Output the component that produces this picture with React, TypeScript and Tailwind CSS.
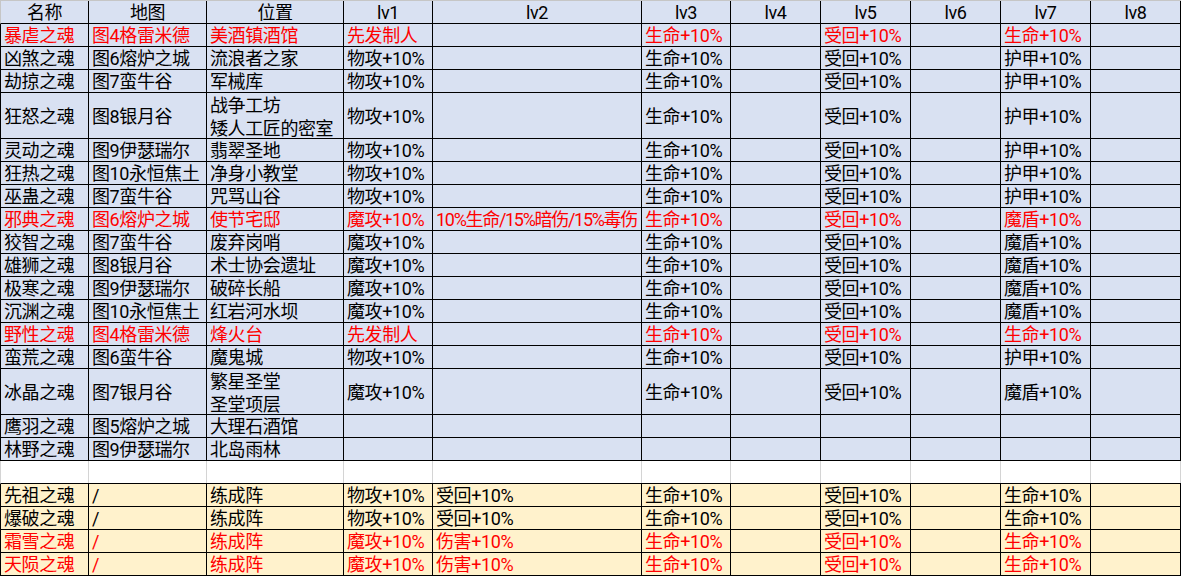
const cols =
  "grid w-[1181px] grid-cols-[88px_118px_137px_89px_209px_89px_90px_90px_90px_90px_90px]";

type Row = { cells: string[]; red?: boolean; tall?: boolean };

// lv1..lv8, only lv1/lv2/lv3/lv5/lv7 carry values
const lv = (a: string, b: string, c: string, d: string, e: string) => [a, b, c, "", d, "", e, ""];

const phys = lv("物攻+10%", "", "生命+10%", "受回+10%", "护甲+10%");
const magic = lv("魔攻+10%", "", "生命+10%", "受回+10%", "魔盾+10%");
const opener = lv("先发制人", "", "生命+10%", "受回+10%", "生命+10%");
const none = lv("", "", "", "", "");

const blueRows: Row[] = [
  { cells: ["暴虐之魂", "图4格雷米德", "美酒镇酒馆", ...opener], red: true },
  { cells: ["凶煞之魂", "图6熔炉之城", "流浪者之家", ...phys] },
  { cells: ["劫掠之魂", "图7蛮牛谷", "军械库", ...phys] },
  { cells: ["狂怒之魂", "图8银月谷", "战争工坊\n矮人工匠的密室", ...phys], tall: true },
  { cells: ["灵动之魂", "图9伊瑟瑞尔", "翡翠圣地", ...phys] },
  { cells: ["狂热之魂", "图10永恒焦土", "净身小教堂", ...phys] },
  { cells: ["巫蛊之魂", "图7蛮牛谷", "咒骂山谷", ...phys] },
  {
    cells: [
      "邪典之魂",
      "图6熔炉之城",
      "使节宅邸",
      ...lv("魔攻+10%", "10%生命/15%暗伤/15%毒伤", "生命+10%", "受回+10%", "魔盾+10%"),
    ],
    red: true,
  },
  { cells: ["狡智之魂", "图7蛮牛谷", "废弃岗哨", ...magic] },
  { cells: ["雄狮之魂", "图8银月谷", "术士协会遗址", ...magic] },
  { cells: ["极寒之魂", "图9伊瑟瑞尔", "破碎长船", ...magic] },
  { cells: ["沉渊之魂", "图10永恒焦土", "红岩河水坝", ...magic] },
  { cells: ["野性之魂", "图4格雷米德", "烽火台", ...opener], red: true },
  { cells: ["蛮荒之魂", "图6蛮牛谷", "魔鬼城", ...phys] },
  { cells: ["冰晶之魂", "图7银月谷", "繁星圣堂\n圣堂项层", ...magic], tall: true },
  { cells: ["鹰羽之魂", "图5熔炉之城", "大理石酒馆", ...none] },
  { cells: ["林野之魂", "图9伊瑟瑞尔", "北岛雨林", ...none] },
];

const forged = lv("物攻+10%", "受回+10%", "生命+10%", "受回+10%", "生命+10%");
const forgedMagic = lv("魔攻+10%", "伤害+10%", "生命+10%", "受回+10%", "生命+10%");

const orangeRows: Row[] = [
  { cells: ["先祖之魂", "/", "练成阵", ...forged] },
  { cells: ["爆破之魂", "/", "练成阵", ...forged] },
  { cells: ["霜雪之魂", "/", "练成阵", ...forgedMagic], red: true },
  { cells: ["天陨之魂", "/", "练成阵", ...forgedMagic], red: true },
];

const headers = ["名称", "地图", "位置", "lv1", "lv2", "lv3", "lv4", "lv5", "lv6", "lv7", "lv8"];

const DataRow = ({ row, bg }: { row: Row; bg: string }) => (
  <div
    className={`${cols} ${bg} ${row.tall ? "h-[46px]" : "h-[23px]"} ${
      row.red ? "text-[#ff0000]" : "text-black"
    } border-b border-l border-black`}
  >
    {row.cells.map((text, i) => (
      <div
        key={i}
        className={`flex items-center overflow-hidden whitespace-pre border-r border-black px-[3px] pt-[2px] ${
          text.length > 12 ? "tracking-[-1.3px]" : ""
        } ${text.includes("\n") ? "leading-[23px]" : ""}`}
      >
        <span className="whitespace-pre">{text}</span>
      </div>
    ))}
  </div>
);

export default function App() {
  return (
    <div className="w-[1181px] h-[576px] overflow-hidden bg-white font-['Roboto','Noto_Sans_CJK_SC',sans-serif] text-[18px] leading-[22px] tracking-[-0.4px]">
      <div className={`${cols} h-[24px] border-t border-l border-t-[#c6c6c6] border-l-[#c6c6c6] border-b border-b-black bg-[#d9e1f2]`}>
        {headers.map((h) => (
          <div key={h} className="flex items-center justify-center border-r border-black pt-[1px]">
            {h}
          </div>
        ))}
      </div>

      {blueRows.map((row) => (
        <DataRow key={row.cells[0]} row={row} bg="bg-[#d9e1f2]" />
      ))}

      {/* spacer row, plain sheet gridlines */}
      <div className={`${cols} h-[23px] border-b border-l border-b-black border-l-[#d4d4d4] bg-white`}>
        {headers.map((h) => (
          <div key={h} className="border-r border-[#d4d4d4]" />
        ))}
      </div>

      {orangeRows.map((row) => (
        <DataRow key={row.cells[0]} row={row} bg="bg-[#fff2cc]" />
      ))}
    </div>
  );
}
